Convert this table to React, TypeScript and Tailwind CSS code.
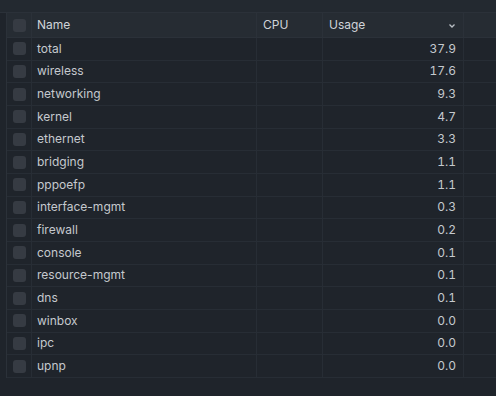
const ROWS = [
  { name: "total", usage: "37.9" },
  { name: "wireless", usage: "17.6" },
  { name: "networking", usage: "9.3" },
  { name: "kernel", usage: "4.7" },
  { name: "ethernet", usage: "3.3" },
  { name: "bridging", usage: "1.1" },
  { name: "pppoefp", usage: "1.1" },
  { name: "interface-mgmt", usage: "0.3" },
  { name: "firewall", usage: "0.2" },
  { name: "console", usage: "0.1" },
  { name: "resource-mgmt", usage: "0.1" },
  { name: "dns", usage: "0.1" },
  { name: "winbox", usage: "0.0" },
  { name: "ipc", usage: "0.0" },
  { name: "upnp", usage: "0.0" },
];

const Check = () => (
  <div className="w-[13px] h-[13px] rounded-[3px] bg-[#363b43]" />
);

const App = () => {
  return (
    <div
      className="w-[496px] h-[396px] bg-[#1f242b] overflow-hidden text-[12px]"
      style={{ fontFamily: "Inter, 'Noto Sans', sans-serif" }}
    >
      <div className="h-[13px] bg-[#232930] border-b border-[#2b3139]" />
      <div className="ml-[6px] border-l border-[#2b3139]">
        <div className="flex h-[25px] bg-[#262c33] border-b border-[#2b3139] text-[#d0d4d9]">
          <div className="w-[25px] flex items-center justify-center border-r border-[#2b3139]">
            <Check />
          </div>
          <div className="w-[225px] flex items-center pl-[5px] border-r border-[#2b3139]">Name</div>
          <div className="w-[66px] flex items-center pl-[6px] border-r border-[#2b3139]">CPU</div>
          <div className="w-[141px] flex items-center justify-between pl-[6px] pr-[7px] border-r border-[#2b3139]">
            <span>Usage</span>
            <svg width="8" height="8" viewBox="0 0 8 8" className="mt-[1px]">
              <path d="M1.5 2.5 L4 5 L6.5 2.5" fill="none" stroke="#b9bec4" strokeWidth="1.3" />
            </svg>
          </div>
          <div className="flex-1" />
        </div>
        {ROWS.map((r) => (
          <div key={r.name} className="flex h-[22.67px] border-b border-[#272d35] text-[#c5c9ce]">
            <div className="w-[25px] flex items-center justify-center border-r border-[#272d35]">
              <Check />
            </div>
            <div className="w-[225px] flex items-center pl-[5px] border-r border-[#272d35]">{r.name}</div>
            <div className="w-[66px] border-r border-[#272d35]" />
            <div className="w-[141px] flex items-center justify-end pr-[7px] border-r border-[#272d35] tabular-nums">
              {r.usage}
            </div>
            <div className="flex-1" />
          </div>
        ))}
      </div>
    </div>
  );
};

export default App;
